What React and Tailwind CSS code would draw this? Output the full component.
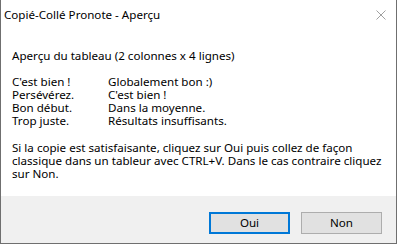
export default function App() {
  const rows = [
    ["C'est bien !", 'Globalement bon :)'],
    ['Persévérez.', "C'est bien !"],
    ['Bon début.', 'Dans la moyenne.'],
    ['Trop juste.', 'Résultats insuffisants.'],
  ];
  return (
    <div className="w-[398px] h-[245px] bg-white" style={{ fontFamily: '"Noto Sans", "Open Sans", sans-serif' }}>
      <div className="w-[397px] h-[244px] border-l border-r border-b border-[#6f6f6f] flex flex-col text-black">
        <div className="h-[29px] flex items-center justify-between pl-[3px] pr-[10px]">
          <span className="text-[11.6px] leading-none">Copié-Collé Pronote - Aperçu</span>
          <svg width="10" height="10" viewBox="0 0 10 10" className="mt-[1px]">
            <path d="M0.5 0.5 L9.5 9.5 M9.5 0.5 L0.5 9.5" stroke="#a0a0a0" strokeWidth="1" />
          </svg>
        </div>
        <div className="flex-1 pl-[11px] pt-[20px] text-[11.6px] leading-[13px]">
          <div>Aperçu du tableau (2 colonnes x 4 lignes)</div>
          <div className="mt-[13px] flex">
            <div className="w-[96px] shrink-0">
              {rows.map((r, i) => (
                <div key={i}>{r[0]}</div>
              ))}
            </div>
            <div>
              {rows.map((r, i) => (
                <div key={i}>{r[1]}</div>
              ))}
            </div>
          </div>
          <p className="mt-[14px] w-[378px]">
            Si la copie est satisfaisante, cliquez sur Oui puis collez de façon classique dans un tableur avec CTRL+V. Dans le cas contraire cliquez sur Non.
          </p>
        </div>
        <div className="h-[47px] bg-[#f0f0f0] flex justify-end items-start pt-[16px] pr-[14px] gap-[11px]">
          <button className="w-[81px] h-[22px] bg-[#e1e1e1] border-2 border-[#0078d7] text-[11.6px] leading-none">Oui</button>
          <button className="w-[81px] h-[22px] bg-[#e1e1e1] border border-[#adadad] text-[11.6px] leading-none">Non</button>
        </div>
      </div>
    </div>
  );
}
